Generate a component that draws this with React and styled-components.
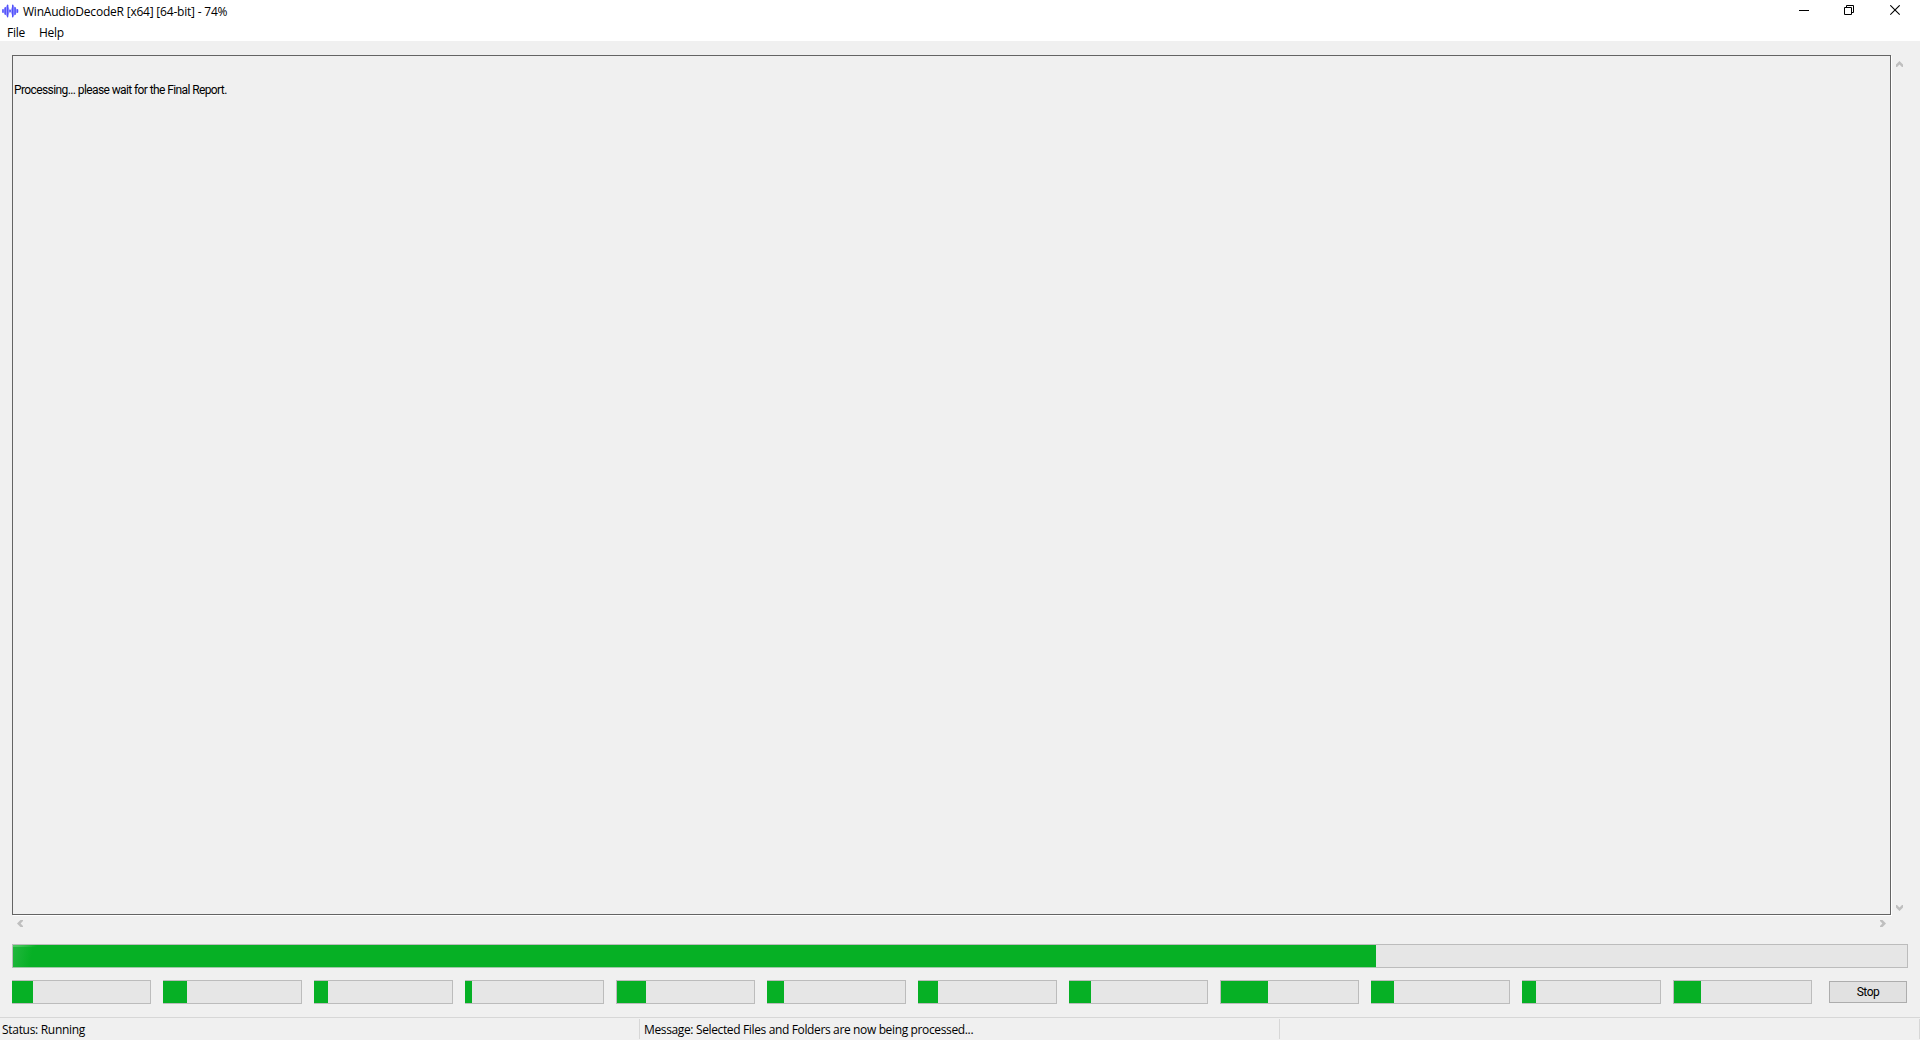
import React from 'react';
import styled, { createGlobalStyle } from 'styled-components';

const GlobalStyle = createGlobalStyle`
  *, *::before, *::after { box-sizing: border-box; }
  body { margin: 0; background: #f0f0f0; overflow: hidden; }
`;

const Window = styled.div`
  display: flex;
  flex-direction: column;
  width: 100%;
  height: 100vh;
  background: #f0f0f0;
  color: #000;
  font: 12px/16px 'Open Sans', 'Noto Sans', sans-serif;
  white-space: nowrap;
  cursor: default;
`;

const TitleBar = styled.header`
  display: flex;
  align-items: flex-start;
  height: 23px;
  background: #fff;
`;

const AppIcon = styled.svg`
  flex: none;
  width: 18px;
  height: 16px;
  margin: 3px 3px 0 2px;
`;

const Title = styled.span`
  flex: 1;
  padding-top: 4px;
  letter-spacing: -0.21px;
`;

const WindowControls = styled.div`
  display: flex;
  gap: 34px;
  padding: 5px 18px 0 0;
`;

const ControlButton = styled.button`
  display: flex;
  width: 12px;
  height: 11px;
  padding: 0;
  border: 0;
  background: none;

  svg { display: block; flex: none; }
`;

const MenuBar = styled.nav`
  display: flex;
  gap: 14px;
  height: 18px;
  padding: 2px 0 0 7px;
  background: #fff;
`;

const MenuItem = styled.span`
  letter-spacing: -0.25px;
`;

const Content = styled.main`
  display: flex;
  flex: 1;
  flex-direction: column;
  padding: 14px 12px 0;
`;

const ReportArea = styled.section`
  display: grid;
  grid-template-columns: 1879px 17px;
  grid-template-rows: 860px 17px;
`;

const Report = styled.div`
  padding: 26px 0 0 1px;
  border: 1px solid #646464;
  box-shadow: 1px 1px 0 #fff;
  font-family: Roboto, 'Liberation Sans', sans-serif;
  letter-spacing: -0.6px;
`;

const ScrollTrack = styled.div`
  display: flex;
  flex-direction: ${(p) => (p.$vertical ? 'column' : 'row')};
  justify-content: space-between;
  padding: ${(p) => (p.$vertical ? '6px 0 4px 5px' : '5px 5px 0 5px')};
`;

const Arrow = styled.svg`
  display: block;
  flex: none;
`;

const Track = styled.div`
  flex: none;
  display: flex;
  width: ${(p) => p.$width}px;
  height: 24px;
  padding-left: ${(p) => (p.$flush ? 0 : 1)}px;
  background:
    linear-gradient(#bcbcbc, #bcbcbc) right / 1px 100% no-repeat,
    linear-gradient(#bcbcbc, #bcbcbc) top / 100% 1px no-repeat,
    linear-gradient(#bcbcbc, #bcbcbc) bottom / 100% 1px no-repeat,
    linear-gradient(#bcbcbc, #bcbcbc) left / 1px 100% no-repeat,
    #e6e6e6;
`;

const Fill = styled.div`
  height: 22px;
  margin-top: 1px;
  background: #06b025;
`;

const TotalFill = styled(Fill)`
  background:
    linear-gradient(90deg, #4fca63, #06b02500) left top / 24px 2px no-repeat,
    linear-gradient(100deg, #22b73e 0, #06b025 20px);
  box-shadow: 0 1px 0 #a0c8a8;
`;

const TotalProgress = styled.div`
  margin-top: 12px;
`;

const WorkerRow = styled.div`
  display: flex;
  align-items: center;
  gap: 12px;
  margin-top: 12px;
`;

const StopButton = styled.button`
  width: 78px;
  height: 22px;
  margin: 0 0 0 5px;
  padding: 0;
  border: 1px solid #adadad;
  background: #e1e1e1;
  color: #000;
  font: 12px/18px Roboto, 'Liberation Sans', sans-serif;
  letter-spacing: -0.5px;
`;

const StatusBar = styled.footer`
  display: grid;
  grid-template-columns: 640px 640px 640px;
  height: 23px;
  padding: 1px 0 1px;
  border-top: 1px solid #d7d7d7;
`;

const StatusCell = styled.div`
  padding: 3px 0 0 ${(p) => p.$indent}px;
  border-right: 1px solid #d7d7d7;
  letter-spacing: ${(p) => p.$spacing}px;
`;

const WAVE = [[0.9, 4], [3.2, 8], [5.6, 13], [8.1, 3], [10.7, 13], [13.1, 8], [15.5, 4]];

const ARROWS = {
  up: { w: 7, h: 6, d: 'M0 3.5 3.5 0 7 3.5V6H6L3.5 3.6 1 6H0Z' },
  down: { w: 7, h: 6, d: 'M0 2.5 3.5 6 7 2.5V0H6L3.5 2.4 1 0H0Z' },
  left: { w: 6, h: 7, d: 'M3.5 0 0 3.5 3.5 7H6V6L3.6 3.5 6 1V0Z' },
  right: { w: 6, h: 7, d: 'M2.5 0 6 3.5 2.5 7H0V6L2.4 3.5 0 1V0Z' },
};

const WORKERS = [
  { fill: 21, flush: true },
  { fill: 24, flush: true },
  { fill: 14, flush: true },
  { fill: 7, flush: true },
  { fill: 29 },
  { fill: 17, flush: true },
  { fill: 20, flush: true },
  { fill: 22, flush: true },
  { fill: 47 },
  { fill: 23, flush: true },
  { fill: 14, flush: true },
  { fill: 27 },
];

function ScrollArrow({ dir }) {
  const { w, h, d } = ARROWS[dir];
  return (
    <Arrow width={w} height={h} viewBox={`0 0 ${w} ${h}`}>
      <path d={d} fill="#bfbfbf" />
    </Arrow>
  );
}

export default function App() {
  return (
    <Window>
      <GlobalStyle />
      <TitleBar>
        <AppIcon viewBox="0 0 18 16">
          <path d="M0 8 5.6 2 8.2 8 10.8 2 16.5 8 10.8 14 8.2 8 5.6 14Z" fill="#6a6aff" opacity=".65" />
          {WAVE.map(([x, h]) => (
            <rect key={x} x={x - 0.7} y={8 - h / 2} width="1.4" height={h} rx="0.7" fill="#5050fa" />
          ))}
        </AppIcon>
        <Title>WinAudioDecodeR [x64] [64-bit] - 74%</Title>
        <WindowControls>
          <ControlButton aria-label="Minimize">
            <svg width="11" height="11"><path d="M1 5.5h10" stroke="#000" /></svg>
          </ControlButton>
          <ControlButton aria-label="Restore">
            <svg width="11" height="11" fill="none" stroke="#000">
              <path d="M.5 2.5h7v7h-7zM2.5 2.5v-2h7v7h-2" />
            </svg>
          </ControlButton>
          <ControlButton aria-label="Close">
            <svg width="11" height="11"><path d="M.3.3l9.4 9.4M9.7.3l-9.4 9.4" stroke="#000" strokeWidth="1.1" /></svg>
          </ControlButton>
        </WindowControls>
      </TitleBar>
      <MenuBar>
        <MenuItem>File</MenuItem>
        <MenuItem>Help</MenuItem>
      </MenuBar>
      <Content>
        <ReportArea>
          <Report>Processing... please wait for the Final Report.</Report>
          <ScrollTrack $vertical>
            <ScrollArrow dir="up" />
            <ScrollArrow dir="down" />
          </ScrollTrack>
          <ScrollTrack>
            <ScrollArrow dir="left" />
            <ScrollArrow dir="right" />
          </ScrollTrack>
        </ReportArea>
        <TotalProgress>
          <Track $width={1896}>
            <TotalFill style={{ width: 1363 }} />
          </Track>
        </TotalProgress>
        <WorkerRow>
          {WORKERS.map((w, i) => (
            <Track key={i} $width={139} $flush={w.flush}>
              <Fill style={{ width: w.fill }} />
            </Track>
          ))}
          <StopButton>Stop</StopButton>
        </WorkerRow>
      </Content>
      <StatusBar>
        <StatusCell $indent={2} $spacing={-0.3}>Status: Running</StatusCell>
        <StatusCell $indent={4} $spacing={-0.36}>
          Message: Selected Files and Folders are now being processed...
        </StatusCell>
        <StatusCell $indent={4} $spacing={0} />
      </StatusBar>
    </Window>
  );
}
